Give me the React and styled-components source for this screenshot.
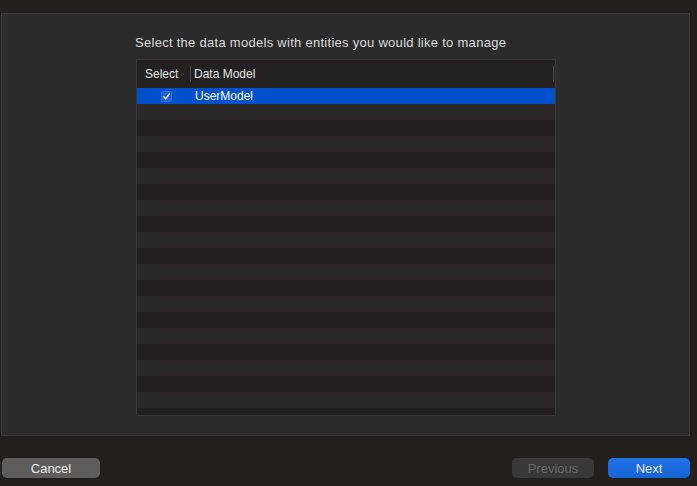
import React from "react";
import styled, { createGlobalStyle } from "styled-components";

const GlobalStyle = createGlobalStyle`
  html, body {
    margin: 0;
    padding: 0;
    background: #221f1d;
  }
  body {
    font-family: "Liberation Sans", Arial, sans-serif;
    -webkit-font-smoothing: antialiased;
  }
`;

const Page = styled.div`
  width: 697px;
  height: 486px;
  display: flex;
  flex-direction: column;
  box-sizing: border-box;
  padding: 13px 7px 0 1px;
  background: #221f1d;
`;

const Panel = styled.div`
  height: 423px;
  box-sizing: border-box;
  background: #2b2b2b;
  border: 1px solid #3b3a39;
  display: flex;
  flex-direction: column;
  padding: 21px 0 0 134px;
`;

const Content = styled.div`
  width: 420px;
  display: flex;
  flex-direction: column;
  gap: 9px;
`;

const Title = styled.div`
  font-size: 13px;
  line-height: 15px;
  letter-spacing: 0.28px;
  color: #dcdcdc;
  margin-left: -1px;
  white-space: nowrap;
`;

const Table = styled.div`
  height: 357px;
  box-sizing: border-box;
  border: 1px solid #3a3938;
  display: flex;
  flex-direction: column;
  overflow: hidden;
`;

const Header = styled.div`
  height: 28px;
  flex-shrink: 0;
  display: flex;
  align-items: center;
  background: #222020;
  font-size: 12px;
  color: #e6e6e6;
`;

const HeadCell = styled.div`
  width: ${({ $w }) => ($w ? `${$w}px` : "auto")};
  flex: ${({ $w }) => ($w ? "none" : "1")};
  height: 16px;
  box-sizing: border-box;
  display: flex;
  align-items: center;
  padding-left: ${({ $pad }) => $pad}px;
  border-right: 1px solid #4a4846;
  margin-right: ${({ $gap }) => $gap}px;
`;

const Body = styled.div`
  display: flex;
  flex-direction: column;
`;

const Row = styled.div`
  height: 16px;
  flex-shrink: 0;
  display: flex;
  align-items: center;
  background: ${({ $selected, $odd }) =>
    $selected ? "#0051cc" : $odd ? "#2a2928" : "#221f1e"};
  font-size: 12px;
  color: #ffffff;
`;

const CheckCell = styled.div`
  width: 57px;
  flex: none;
  display: flex;
  justify-content: center;
  padding-left: 1px;
`;

const Checkbox = styled.div`
  width: 11px;
  height: 11px;
  border-radius: 3px;
  background: #1e62dc;
  box-shadow: inset 0 0 0 0.5px rgba(255, 255, 255, 0.15);
  display: flex;
  align-items: center;
  justify-content: center;
`;

const NameCell = styled.div`
  flex: 1;
`;

const Footer = styled.div`
  display: flex;
  align-items: center;
  padding: 22px 0 0 1px;
  gap: 14px;
`;

const Button = styled.div`
  width: ${({ $w }) => $w}px;
  height: 20px;
  border-radius: 5px;
  display: flex;
  align-items: center;
  justify-content: center;
  font-size: 13px;
  background: ${({ $variant }) =>
    $variant === "primary"
      ? "linear-gradient(#1f72e6, #1665d6)"
      : $variant === "disabled"
      ? "#3a3836"
      : "#5e5d5c"};
  color: ${({ $variant }) =>
    $variant === "disabled" ? "#6c6a68" : "#ececec"};
  ${({ $push }) => ($push ? "margin-left: auto;" : "")}
`;

const models = ["UserModel"];

export default function App() {
  const rows = Array.from({ length: 21 }, (_, i) => models[i] || null);
  return (
    <Page>
      <GlobalStyle />
      <Panel>
        <Content>
          <Title>Select the data models with entities you would like to manage</Title>
          <Table>
            <Header>
              <HeadCell $w={54} $pad={8} $gap={3}>Select</HeadCell>
              <HeadCell $pad={0} $gap={1}>Data Model</HeadCell>
            </Header>
            <Body>
              {rows.map((name, i) => (
                <Row key={i} $selected={i === 0} $odd={i % 2 === 1}>
                  <CheckCell>
                    {name && (
                      <Checkbox>
                        <svg width="9" height="9" viewBox="0 0 9 9">
                          <path
                            d="M1.8 4.8 L3.7 6.8 L7.3 1.8"
                            fill="none"
                            stroke="#fff"
                            strokeWidth="1.4"
                            strokeLinecap="round"
                            strokeLinejoin="round"
                          />
                        </svg>
                      </Checkbox>
                    )}
                  </CheckCell>
                  <NameCell>{name}</NameCell>
                </Row>
              ))}
            </Body>
          </Table>
        </Content>
      </Panel>
      <Footer>
        <Button $w={98}>Cancel</Button>
        <Button $w={82} $variant="disabled" $push>Previous</Button>
        <Button $w={82} $variant="primary">Next</Button>
      </Footer>
    </Page>
  );
}
